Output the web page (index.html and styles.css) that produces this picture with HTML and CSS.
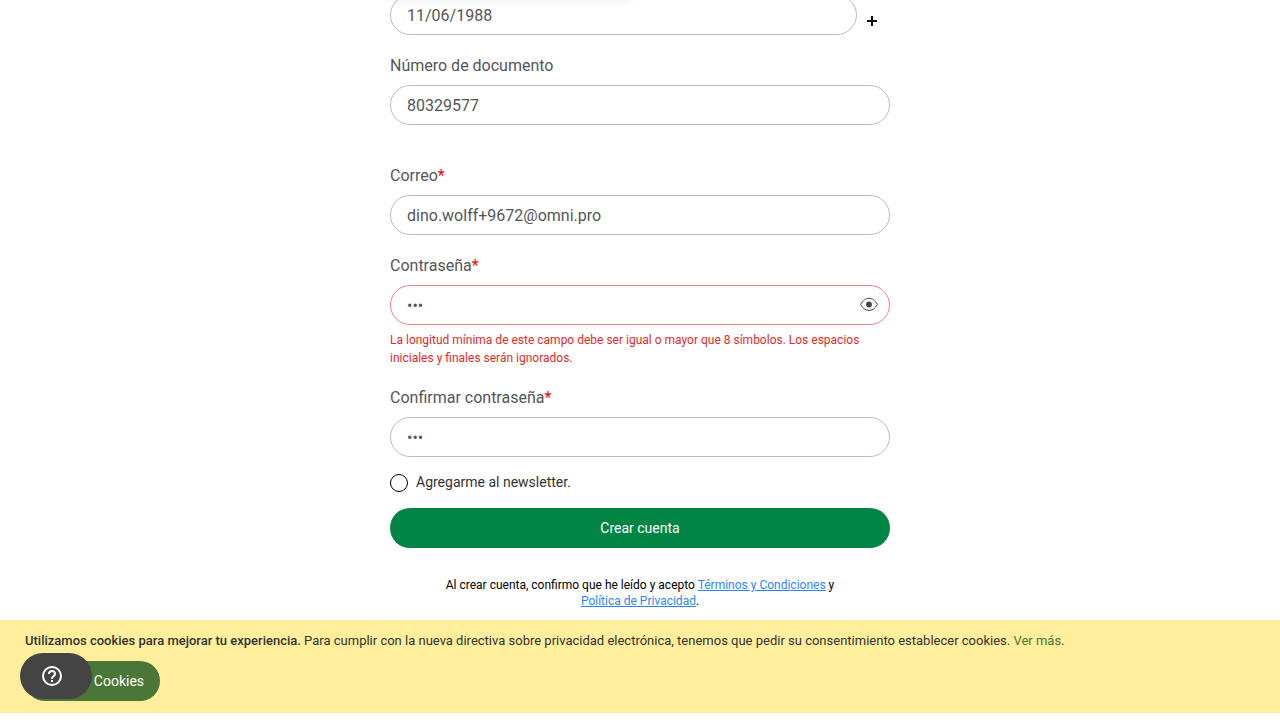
FILE: index.html
```html
<!DOCTYPE html>
<html lang="es">
<head>
<meta charset="utf-8">
<meta name="viewport" content="width=device-width, initial-scale=1">
<title>Crear cuenta</title>
<link rel="stylesheet" href="styles.css">
</head>
<body>
<div class="top-panel" aria-hidden="true"></div>
<main class="page">
  <form class="form">
    <div class="date-row">
      <input class="input" type="text" aria-label="Fecha de nacimiento" value="11/06/1988">
      <button class="date-toggle" type="button" aria-label="Abrir calendario">
        <svg width="10" height="10" viewBox="0 0 10 10"><path d="M5 0v10M0 5h10" stroke="#111" stroke-width="2"/></svg>
      </button>
    </div>
    <div class="field">
      <label class="label" for="doc">Número de documento</label>
      <input class="input" id="doc" type="text" value="80329577">
    </div>
    <div class="field field-account">
      <label class="label" for="mail">Correo<span class="required">*</span></label>
      <input class="input" id="mail" type="email" value="dino.wolff+9672@omni.pro">
    </div>
    <div class="field">
      <label class="label" for="pass">Contraseña<span class="required">*</span></label>
      <div class="password">
        <input class="input input-error" id="pass" type="password" value="abc" aria-describedby="pass-error">
        <button class="eye" type="button" aria-label="Mostrar contraseña">
          <svg width="18" height="14" viewBox="0 0 18 14"><path d="M.6 7.500C2.800 3.400 5.600 1.300 9 1.300s6.200 2.100 8.400 6.200c-2.200 3.900-5 5.900-8.400 5.900S2.800 11.400.6 7.500Z" fill="none" stroke="#444" stroke-width="1"/><circle cx="9" cy="7.500" r="2.900" fill="#444"/></svg>
        </button>
      </div>
      <p class="error" id="pass-error">La longitud mínima de este campo debe ser igual o mayor que 8 símbolos. Los espacios iniciales y finales serán ignorados.</p>
    </div>
    <div class="field">
      <label class="label" for="confirm">Confirmar contraseña<span class="required">*</span></label>
      <input class="input" id="confirm" type="password" value="abc">
    </div>
    <div class="newsletter">
      <input class="check" id="news" type="checkbox">
      <label for="news">Agregarme al newsletter.</label>
    </div>
    <button class="submit" type="submit">Crear cuenta</button>
    <p class="terms">Al crear cuenta, confirmo que he leído y acepto <a href="#">Términos y Condiciones</a> y <a href="#">Política de Privacidad</a>.</p>
  </form>
</main>
<section class="cookies" aria-label="Aviso de cookies">
  <p class="cookies-text"><strong>Utilizamos cookies para mejorar tu experiencia.</strong> Para cumplir con la nueva directiva sobre privacidad electrónica, tenemos que pedir su consentimiento establecer cookies. <a href="#">Ver más</a>.</p>
  <button class="allow" type="button">Permitir Cookies</button>
</section>
<button class="help" type="button" aria-label="Ayuda">
  <svg width="20" height="20" viewBox="0 0 20 20" fill="none" stroke="#fff" stroke-width="2"><circle cx="10" cy="10" r="9"/><path d="M7 8c0-1.700 1.300-3 3-3s3 1.300 3 3c0 2-3 2.200-3 5"/><path d="M10 14v2"/></svg>
</button>
</body>
</html>
```

FILE: styles.css
```css
* { box-sizing: border-box; }
body {
  margin: 0;
  min-height: 100vh;
  display: flex;
  flex-direction: column;
  background: #fff;
  color: #333;
  font-family: Roboto, "Liberation Sans", sans-serif;
  font-size: 14px;
}
p { margin: 0; }
button, input { font: inherit; margin: 0; }
button { border: 0; padding: 0; cursor: pointer; }
svg { display: block; }

.top-panel {
  position: absolute;
  top: -42px;
  left: 50%;
  width: 240px;
  height: 40px;
  margin-left: -250px;
  box-shadow: 0 0 10px rgba(0, 0, 0, .12);
}
.page { padding: 0 16px; margin-top: -5px; }
.form { max-width: 500px; margin: 0 auto; }
.date-row { display: flex; align-items: center; }
.date-toggle { padding: 11px 13px 0 10px; background: none; }
.field { margin-top: 21px; }
.field-account { margin-top: 41px; }
.label {
  display: block;
  margin-bottom: 9px;
  color: #545658;
  font-size: 16px;
  line-height: 20px;
}
.required { color: #f00; }
.input {
  display: block;
  width: 100%;
  height: 40px;
  padding: 0 16px;
  border: 1px solid #bbb;
  border-radius: 20px;
  background: transparent;
  color: #545658;
  font-size: 16px;
  outline: 0;
}
.input-error { padding-right: 44px; border-color: #ed8380; }
.password { position: relative; }
.eye { position: absolute; right: 12px; top: 12px; background: none; }
.error {
  margin-top: 6px;
  color: #e02b27;
  font-size: 12px;
  line-height: 18px;
}
.newsletter {
  display: flex;
  align-items: flex-start;
  gap: 8px;
  margin-top: 17px;
  line-height: 16px;
}
.check {
  appearance: none;
  width: 18px;
  height: 18px;
  border: 1px solid #000;
  border-radius: 50%;
}
.submit {
  display: block;
  width: 100%;
  height: 40px;
  margin-top: 16px;
  border-radius: 20px;
  background: #008545;
  color: #fff;
}
.terms {
  margin: 29px 50px 11px;
  color: #000;
  font-size: 12px;
  line-height: 16px;
  text-align: center;
}
.terms a { color: #2b87f0; }
.cookies {
  padding: 12px 25px;
  background: #ffee9c;
  font-size: 13px;
}
.cookies-text { line-height: 18px; }
.cookies-text strong { font-weight: 500; }
.cookies-text a { color: #4a7637; text-decoration: none; }
.allow {
  height: 40px;
  margin-top: 11px;
  padding: 0 16px;
  border-radius: 20px;
  background: #4a7637;
  color: #fff;
  font-size: 14px;
}
.help {
  position: fixed;
  left: 20px;
  bottom: 21px;
  width: 72px;
  height: 46px;
  padding-left: 22px;
  border-radius: 23px;
  background: #444;
}
```
